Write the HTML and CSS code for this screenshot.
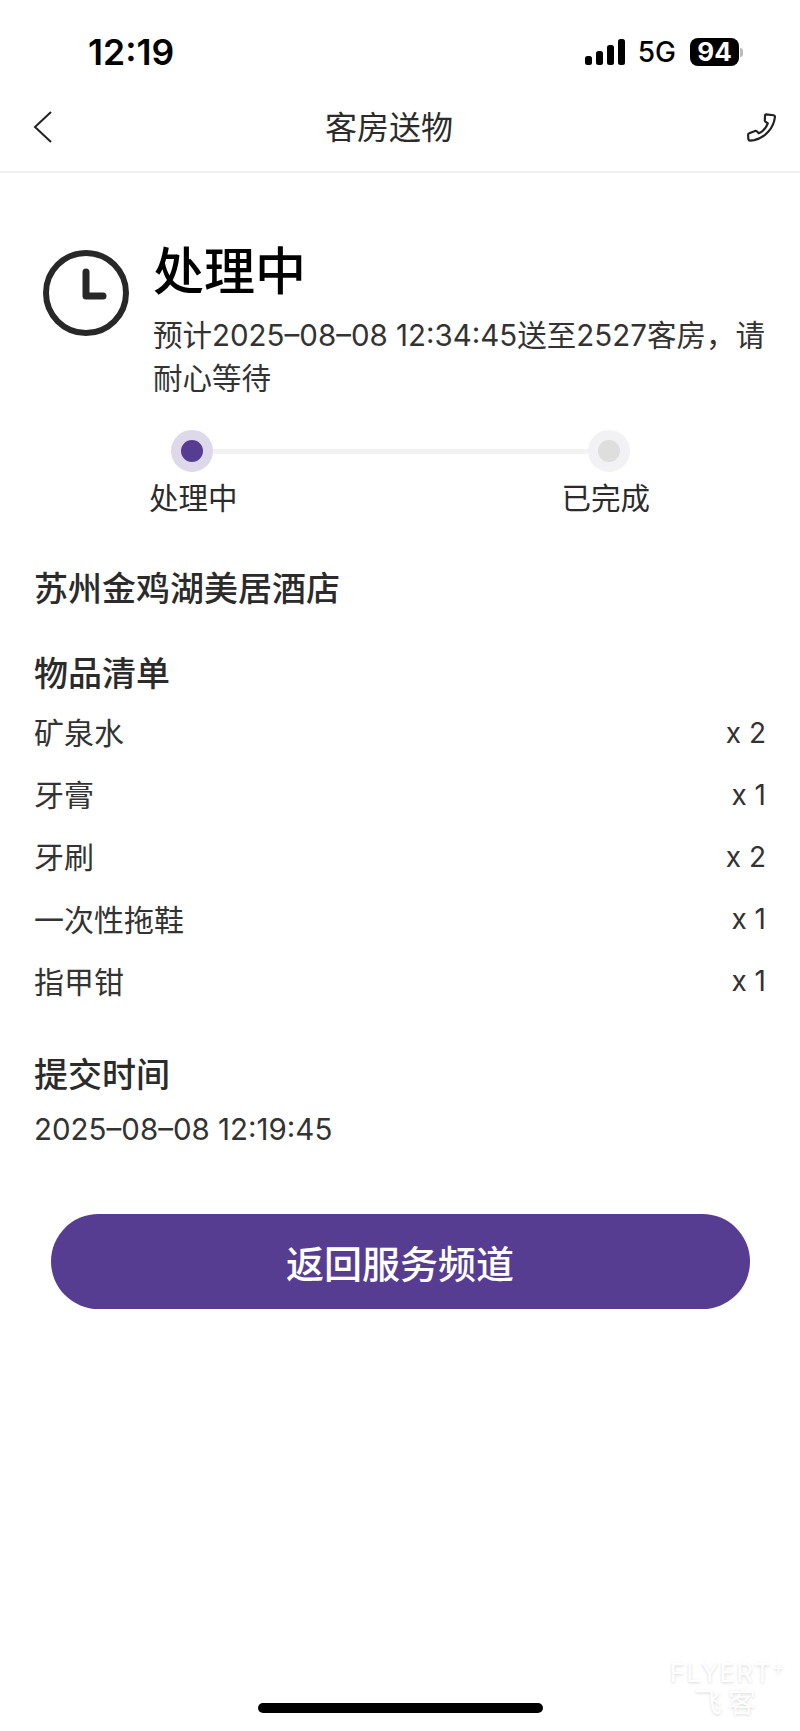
FILE: index.html
```html
<!DOCTYPE html>
<html lang="zh-CN">
<head>
  <meta charset="UTF-8" />
  <meta name="viewport" content="width=device-width, initial-scale=1.0"/>
  <title>客房送物</title>
  <link rel="stylesheet" href="styles.css">
</head>
<body>
  <div class="status-bar">
    <span class="status-time">12:19</span>
    <div class="status-right">
      <svg class="signal" width="40" height="26" viewBox="0 0 40 26">
        <rect x="0" y="17" width="7" height="9" rx="2.5"/>
        <rect x="11" y="12" width="7" height="14" rx="2.5"/>
        <rect x="22" y="6" width="7" height="20" rx="2.5"/>
        <rect x="33" y="0" width="7" height="26" rx="2.5"/>
      </svg>
      <span class="network">5G</span>
      <div class="battery">
        <span class="battery-level">94</span>
        <span class="battery-cap"></span>
      </div>
    </div>
  </div>

  <header class="nav">
    <svg class="nav-icon" width="20" height="32" viewBox="0 0 20 32">
      <path d="M18 1 L2 16 L18 31" fill="none" stroke="#222" stroke-width="2"/>
    </svg>
    <h1 class="nav-title">客房送物</h1>
    <svg class="nav-icon" width="29" height="30" viewBox="0 0 32 32">
      <path d="M21 2 L29.5 3 Q31 3.2 30.8 5 C29.5 17 20 28 8 30.5 L3.5 31 Q1.8 31 1.5 29.5 L1.2 24.5 Q1.2 23.2 2.4 22.8 L9 20.3 Q10 20 10.8 20.8 L13 23 C17.5 21 21 17 23 12 L20.3 10 Q19.4 9.3 19.7 8.3 L19.9 3 Q20 2 21 2 Z" fill="none" stroke="#222" stroke-width="2.4" stroke-linejoin="round"/>
    </svg>
  </header>

  <main class="content">
    <section class="state">
      <svg class="state-icon" width="86" height="86" viewBox="0 0 86 86">
        <circle cx="43" cy="43" r="40" fill="none" stroke="#282828" stroke-width="6"/>
        <path d="M43 22 V46 H60" fill="none" stroke="#282828" stroke-width="7" stroke-linecap="round" stroke-linejoin="round"/>
      </svg>
      <div class="state-text">
        <h2 class="state-title">处理中</h2>
        <p class="state-desc">预计2025–08–08 12:34:45送至2527客房，请耐心等待</p>
      </div>
    </section>

    <section class="steps">
      <div class="steps-track">
        <span class="step-dot step-dot-active"></span>
        <span class="step-line"></span>
        <span class="step-dot"></span>
      </div>
      <div class="steps-labels">
        <span>处理中</span>
        <span>已完成</span>
      </div>
    </section>

    <h3 class="heading hotel">苏州金鸡湖美居酒店</h3>

    <h3 class="heading list-heading">物品清单</h3>
    <ul class="items">
      <li class="item"><span>矿泉水</span><span class="item-qty">x 2</span></li>
      <li class="item"><span>牙膏</span><span class="item-qty">x 1</span></li>
      <li class="item"><span>牙刷</span><span class="item-qty">x 2</span></li>
      <li class="item"><span>一次性拖鞋</span><span class="item-qty">x 1</span></li>
      <li class="item"><span>指甲钳</span><span class="item-qty">x 1</span></li>
    </ul>

    <h3 class="heading time-heading">提交时间</h3>
    <p class="submit-time">2025–08–08 12:19:45</p>

    <button class="back-btn">返回服务频道</button>
  </main>

  <div class="watermark">
    <span class="watermark-en">FLYERT<span class="watermark-plus">+</span></span>
    <span class="watermark-cn">飞客</span>
  </div>
  <div class="home-bar"></div>
</body>
</html>
```

FILE: styles.css
```css
* {
  box-sizing: border-box;
}

html, body {
  height: 100%;
}

body {
  margin: 0;
  position: relative;
  display: flex;
  flex-direction: column;
  font-family: Inter, "Noto Sans CJK SC", sans-serif;
  background: #fff;
  color: #2b2b2b;
  overflow: hidden;
}

h1, h2, h3, p, ul {
  margin: 0;
  padding: 0;
}

/* status bar */
.status-bar {
  height: 90px;
  padding: 14px 57px 0 88px;
  display: flex;
  align-items: center;
  justify-content: space-between;
  color: #000;
}

.status-time {
  font-size: 35.5px;
  font-weight: 600;
}

.status-right {
  display: flex;
  align-items: center;
}

.signal {
  fill: #000;
  margin-right: 13px;
}

.network {
  font-size: 28px;
  font-weight: 500;
  margin-right: 14px;
}

.battery {
  display: flex;
  align-items: center;
}

.battery-level {
  width: 49px;
  height: 28px;
  border-radius: 8px;
  background: #000;
  color: #fff;
  font-size: 26px;
  font-weight: 700;
  line-height: 28px;
  text-align: center;
}

.battery-cap {
  width: 3px;
  height: 9px;
  margin-left: 1px;
  border-radius: 0 3px 3px 0;
  background: #bbb;
}

/* nav */
.nav {
  height: 83px;
  padding: 0 24px 12px 33px;
  display: flex;
  align-items: center;
  justify-content: space-between;
  border-bottom: 2px solid #f0f0f0;
}

.nav-icon {
  margin-top: 5px;
}

.nav-title {
  margin-right: 22px;
  font-size: 32px;
  font-weight: 400;
  color: #2b2b2b;
}

/* main content */
.content {
  padding: 66px 34px 0;
  display: flex;
  flex-direction: column;
}

.state {
  display: flex;
  align-items: flex-start;
  gap: 24px;
}

.state-icon {
  flex: none;
  margin: 11px 0 0 9px;
}

.state-title {
  font-size: 51px;
  line-height: 66px;
  font-weight: 500;
  color: #000;
}

.state-desc {
  margin-top: 9px;
  font-size: 29.5px;
  line-height: 43px;
  color: #333;
}

.steps {
  margin-top: 30px;
  padding: 0 116px 0 115px;
}

.steps-track {
  padding: 0 20px 0 22px;
  display: flex;
  align-items: center;
}

.step-dot {
  flex: none;
  width: 42px;
  height: 42px;
  border-radius: 50%;
  border: 10px solid #f2f2f4;
  background: #dedede;
}

.step-dot-active {
  border-color: #ddd8ea;
  background: #563d91;
}

.step-line {
  flex: 1;
  height: 5px;
  background: #f2f2f2;
}

.steps-labels {
  margin-top: 5px;
  display: flex;
  justify-content: space-between;
  font-size: 29.5px;
  line-height: 42px;
}

.heading {
  font-size: 34px;
  font-weight: 500;
  line-height: 46px;
  color: #2b2b2b;
}

.hotel {
  margin-top: 47px;
}

.list-heading {
  margin-top: 39px;
}

.items {
  list-style: none;
  margin-top: 3px;
}

.item {
  height: 62.2px;
  display: flex;
  align-items: center;
  justify-content: space-between;
  font-size: 30px;
  color: #333;
}

.item-qty {
  padding-top: 3px;
  font-size: 28px;
}

.time-heading {
  margin-top: 41px;
}

.submit-time {
  margin-top: 10px;
  font-size: 29.5px;
  line-height: 42px;
  color: #333;
}

.back-btn {
  align-self: center;
  width: 699px;
  height: 95px;
  margin-top: 64px;
  border: none;
  border-radius: 48px;
  background: #563d91;
  color: #fff;
  font-family: inherit;
  font-size: 38px;
  font-weight: 500;
}

/* overlays at the foot of the page */
.watermark {
  position: absolute;
  right: 14px;
  bottom: 12px;
  display: flex;
  flex-direction: column;
  align-items: center;
  color: #fff;
  text-shadow: 0 1px 3px rgba(0, 0, 0, 0.16);
}

.watermark-en {
  font-size: 26px;
  line-height: 28px;
  letter-spacing: 1px;
}

.watermark-plus {
  font-size: 20px;
  vertical-align: 8px;
}

.watermark-cn {
  font-size: 28px;
  line-height: 32px;
  letter-spacing: 6px;
}

.home-bar {
  position: absolute;
  left: 258px;
  bottom: 18px;
  width: 285px;
  height: 10px;
  border-radius: 5px;
  background: #000;
}
```
